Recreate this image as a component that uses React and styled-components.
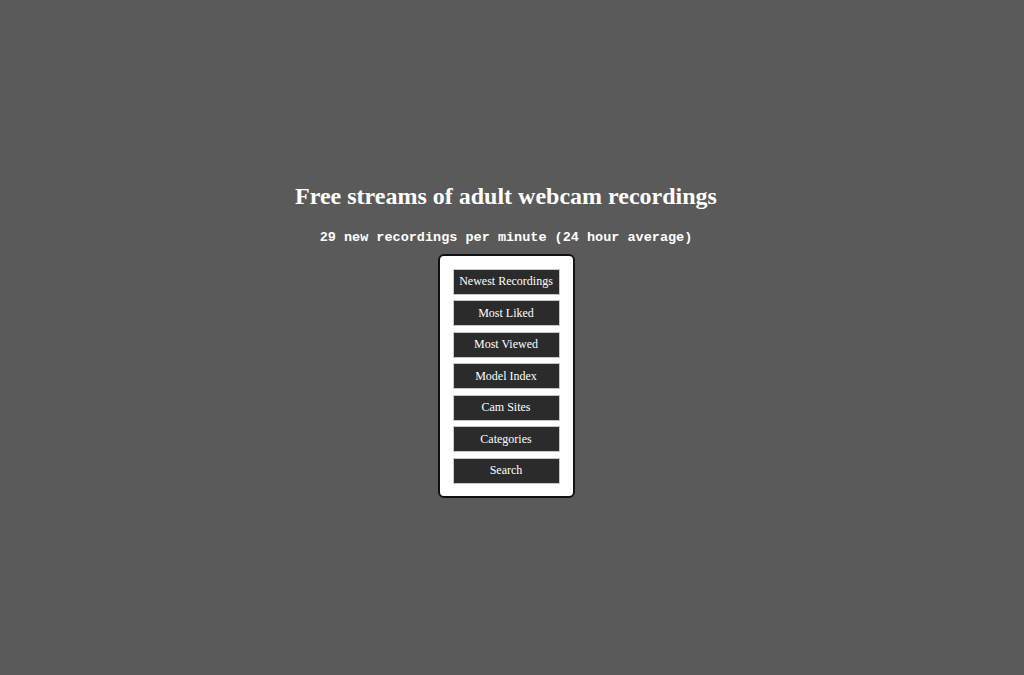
import React from "react";
import styled, { createGlobalStyle } from "styled-components";

const Global = createGlobalStyle`
  html, body { margin: 0; padding: 0; background: #5a5a5a; }
  body { font-family: "Liberation Serif", "Times New Roman", serif; }
`;

const Page = styled.div`
  min-height: 100vh;
  box-sizing: border-box;
  display: flex;
  flex-direction: column;
  align-items: center;
  justify-content: center;
  padding-right: 12px;
  padding-top: 5px;
`;

const Title = styled.h1`
  margin: 0;
  color: #fff;
  font-family: "Liberation Serif", "Times New Roman", serif;
  font-weight: bold;
  font-size: 24px;
  line-height: 28px;
`;

const Stat = styled.p`
  margin: 20px 0 8px;
  color: #fff;
  font-family: "Liberation Mono", "Courier New", monospace;
  font-weight: bold;
  font-size: 13.5px;
  line-height: 16px;
`;

const Menu = styled.nav`
  background: #fff;
  border: 2px solid #111;
  border-radius: 6px;
  padding: 12.5px 13px;
  display: flex;
  flex-direction: column;
  gap: 5.5px;
  width: 107px;
`;

const MenuButton = styled.a`
  display: flex;
  align-items: center;
  justify-content: center;
  height: 26px;
  box-sizing: border-box;
  background: #2b2b2b;
  border: 1px solid #c8c8c8;
  color: #fff;
  font-family: "Liberation Serif", "Times New Roman", serif;
  font-size: 12px;
  text-decoration: none;
  white-space: nowrap;
  cursor: pointer;
`;

const items = [
  "Newest Recordings",
  "Most Liked",
  "Most Viewed",
  "Model Index",
  "Cam Sites",
  "Categories",
  "Search",
];

export default function App() {
  return (
    <>
      <Global />
      <Page>
        <Title>Free streams of adult webcam recordings</Title>
        <Stat>29 new recordings per minute (24 hour average)</Stat>
        <Menu>
          {items.map((t) => (
            <MenuButton key={t}>{t}</MenuButton>
          ))}
        </Menu>
      </Page>
    </>
  );
}
